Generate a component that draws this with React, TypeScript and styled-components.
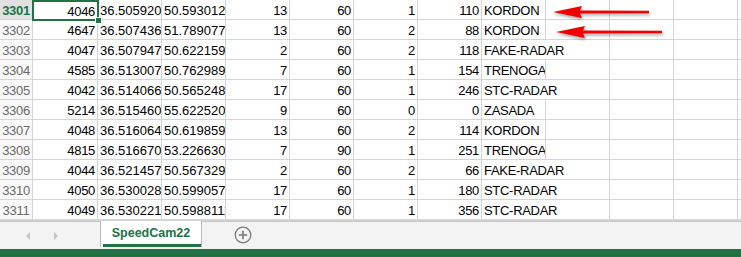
import React from "react";
import styled, { createGlobalStyle } from "styled-components";

const GlobalStyle = createGlobalStyle`
  html, body {
    margin: 0;
    padding: 0;
    background: #ffffff;
    overflow: hidden;
  }
  body {
    font-family: "Liberation Sans", Arial, sans-serif;
  }
`;

type Row = {
  n: number;
  id: string;
  lat: string;
  lon: string;
  a: string;
  speed: string;
  dir: string;
  angle: string;
  kind: string;
};

const rows: Row[] = [
  { n: 3301, id: "4046", lat: "36.5059205", lon: "50.5930123", a: "13", speed: "60", dir: "1", angle: "110", kind: "KORDON" },
  { n: 3302, id: "4647", lat: "36.5074363", lon: "51.7890771", a: "13", speed: "60", dir: "2", angle: "88", kind: "KORDON" },
  { n: 3303, id: "4047", lat: "36.5079471", lon: "50.6221591", a: "2", speed: "60", dir: "2", angle: "118", kind: "FAKE-RADAR" },
  { n: 3304, id: "4585", lat: "36.5130071", lon: "50.7629891", a: "7", speed: "60", dir: "1", angle: "154", kind: "TRENOGA" },
  { n: 3305, id: "4042", lat: "36.5140664", lon: "50.5652481", a: "17", speed: "60", dir: "1", angle: "246", kind: "STC-RADAR" },
  { n: 3306, id: "5214", lat: "36.5154600", lon: "55.6225200", a: "9", speed: "60", dir: "0", angle: "0", kind: "ZASADA" },
  { n: 3307, id: "4048", lat: "36.5160644", lon: "50.6198594", a: "13", speed: "60", dir: "2", angle: "114", kind: "KORDON" },
  { n: 3308, id: "4815", lat: "36.5166700", lon: "53.2266300", a: "7", speed: "90", dir: "1", angle: "251", kind: "TRENOGA" },
  { n: 3309, id: "4044", lat: "36.5214571", lon: "50.5673290", a: "2", speed: "60", dir: "2", angle: "66", kind: "FAKE-RADAR" },
  { n: 3310, id: "4050", lat: "36.5300281", lon: "50.5990571", a: "17", speed: "60", dir: "1", angle: "180", kind: "STC-RADAR" },
  { n: 3311, id: "4049", lat: "36.5302211", lon: "50.5988111", a: "17", speed: "60", dir: "1", angle: "356", kind: "STC-RADAR" },
];

const GREEN = "#217346";
const GRID = "#d4d4d4";

const Page = styled.div`
  width: 741px;
  height: 257px;
  display: flex;
  flex-direction: column;
  position: relative;
  overflow: hidden;
`;

const Sheet = styled.div`
  height: 221px;
  display: grid;
  grid-template-columns: 33px 65px repeat(11, 64px);
  grid-auto-rows: 20px;
  align-content: start;
  border-bottom: 1px solid ${GRID};
  box-sizing: border-box;
`;

const RowHead = styled.div<{ $active?: boolean }>`
  box-sizing: border-box;
  border-right: 1px solid ${GRID};
  border-bottom: 1px solid ${GRID};
  background: ${(p) => (p.$active ? "#e1e1e1" : "#f9f9f9")};
  color: ${(p) => (p.$active ? GREEN : "#6a6a6a")};
  font-weight: ${(p) => (p.$active ? 700 : 400)};
  font-size: 13px;
  letter-spacing: -0.3px;
  display: flex;
  align-items: center;
  justify-content: center;
  padding-top: 1px;
`;

const Cell = styled.div<{ $align?: "left" | "right"; $span?: number; $tight?: boolean }>`
  box-sizing: border-box;
  position: relative;
  grid-column: span ${(p) => p.$span ?? 1};
  border-right: 1px solid ${GRID};
  border-bottom: 1px solid ${GRID};
  font-size: 13px;
  letter-spacing: ${(p) => (p.$tight ? "0" : "-0.3px")};
  color: #000;
  white-space: nowrap;
  overflow: hidden;
  display: flex;
  align-items: center;
  justify-content: ${(p) => (p.$align === "left" ? "flex-start" : "flex-end")};
  padding: 1px 2px 0 2px;
`;

const ActiveCell = styled.div`
  box-sizing: border-box;
  position: relative;
  z-index: 2;
  margin: 0 -1px -1px -1px;
  background: #ffffff;
  border: 2px solid ${GREEN};
  font-size: 13px;
  letter-spacing: -0.3px;
  color: #000;
  white-space: nowrap;
  display: flex;
  align-items: center;
  justify-content: flex-end;
  padding: 1px 2px 0 2px;
  &::after {
    content: "";
    position: absolute;
    right: -5px;
    bottom: -5px;
    width: 5px;
    height: 5px;
    background: ${GREEN};
    border: 1px solid #fff;
  }
`;

const TabBar = styled.div`
  height: 28px;
  background: #f3f3f3;
  display: flex;
  align-items: stretch;
  border-top: 1px solid #c6c6c6;
  box-sizing: border-box;
`;

const Nav = styled.div`
  width: 100px;
  display: flex;
  align-items: center;
  padding-left: 26px;
  gap: 24px;
  box-sizing: border-box;
`;

const Tri = styled.span<{ $dir: "left" | "right" }>`
  width: 0;
  height: 0;
  border-top: 4px solid transparent;
  border-bottom: 4px solid transparent;
  ${(p) =>
    p.$dir === "left"
      ? "border-right: 4px solid #c3c3c3;"
      : "border-left: 4px solid #c3c3c3;"}
`;

const Tab = styled.div`
  width: 102px;
  margin-top: -1px;
  margin-bottom: 2px;
  background: #ffffff;
  border-left: 1px solid #b8b8b8;
  border-right: 1px solid #b8b8b8;
  box-sizing: border-box;
  display: flex;
  align-items: center;
  justify-content: center;
  color: ${GREEN};
  font-weight: 700;
  font-size: 12.5px;
  position: relative;
  padding-bottom: 2px;
  &::after {
    content: "";
    position: absolute;
    left: 2px;
    right: 0;
    bottom: 0;
    height: 3px;
    background: ${GREEN};
  }
`;

const AddBtn = styled.div`
  margin-left: 32px;
  display: flex;
  align-items: center;
  padding-bottom: 2px;
`;

const Status = styled.div`
  height: 8px;
  background: ${GREEN};
`;

const Arrow = styled.svg<{ $top: number; $left: number }>`
  position: absolute;
  top: ${(p) => p.$top}px;
  left: ${(p) => p.$left}px;
  overflow: visible;
  z-index: 3;
  filter: drop-shadow(1px 2px 1.5px rgba(0, 0, 0, 0.35));
`;

const RedArrow: React.FC<{ top: number; left: number; length: number }> = ({ top, left, length }) => (
  <Arrow $top={top} $left={left} width={length} height={14} viewBox={`0 0 ${length} 14`}>
    <path d={`M0 7 L29 1 L27 5.5 L${length} 5.8 L${length} 8.2 L27 8.5 L29 13 Z`} fill="#f00000" />
  </Arrow>
);

const wide = (r: Row) => r.kind.length > 7;

export default function App() {
  return (
    <>
      <GlobalStyle />
      <Page>
        <Sheet>
          {rows.map((r, i) => (
            <React.Fragment key={r.n}>
              <RowHead $active={i === 0}>{r.n}</RowHead>
              {i === 0 ? <ActiveCell>{r.id}</ActiveCell> : <Cell>{r.id}</Cell>}
              <Cell $align="left" $tight>{r.lat}</Cell>
              <Cell $align="left" $tight>{r.lon}</Cell>
              <Cell>{r.a}</Cell>
              <Cell>{r.speed}</Cell>
              <Cell>{r.dir}</Cell>
              <Cell>{r.angle}</Cell>
              <Cell $align="left" $span={wide(r) ? 2 : 1}>{r.kind}</Cell>
              {!wide(r) && <Cell />}
              <Cell />
              <Cell />
              <Cell />
            </React.Fragment>
          ))}
        </Sheet>
        <TabBar>
          <Nav>
            <Tri $dir="left" />
            <Tri $dir="right" />
          </Nav>
          <Tab>SpeedCam22</Tab>
          <AddBtn>
            <svg width="18" height="18" viewBox="0 0 18 18">
              <circle cx="9" cy="9" r="7.8" fill="none" stroke="#7a7a7a" strokeWidth="1.3" />
              <path d="M9 4.8 V13.2 M4.8 9 H13.2" stroke="#7a7a7a" strokeWidth="1.6" />
            </svg>
          </AddBtn>
        </TabBar>
        <Status />
        <RedArrow top={5} left={553} length={96} />
        <RedArrow top={25} left={556} length={106} />
      </Page>
    </>
  );
}
